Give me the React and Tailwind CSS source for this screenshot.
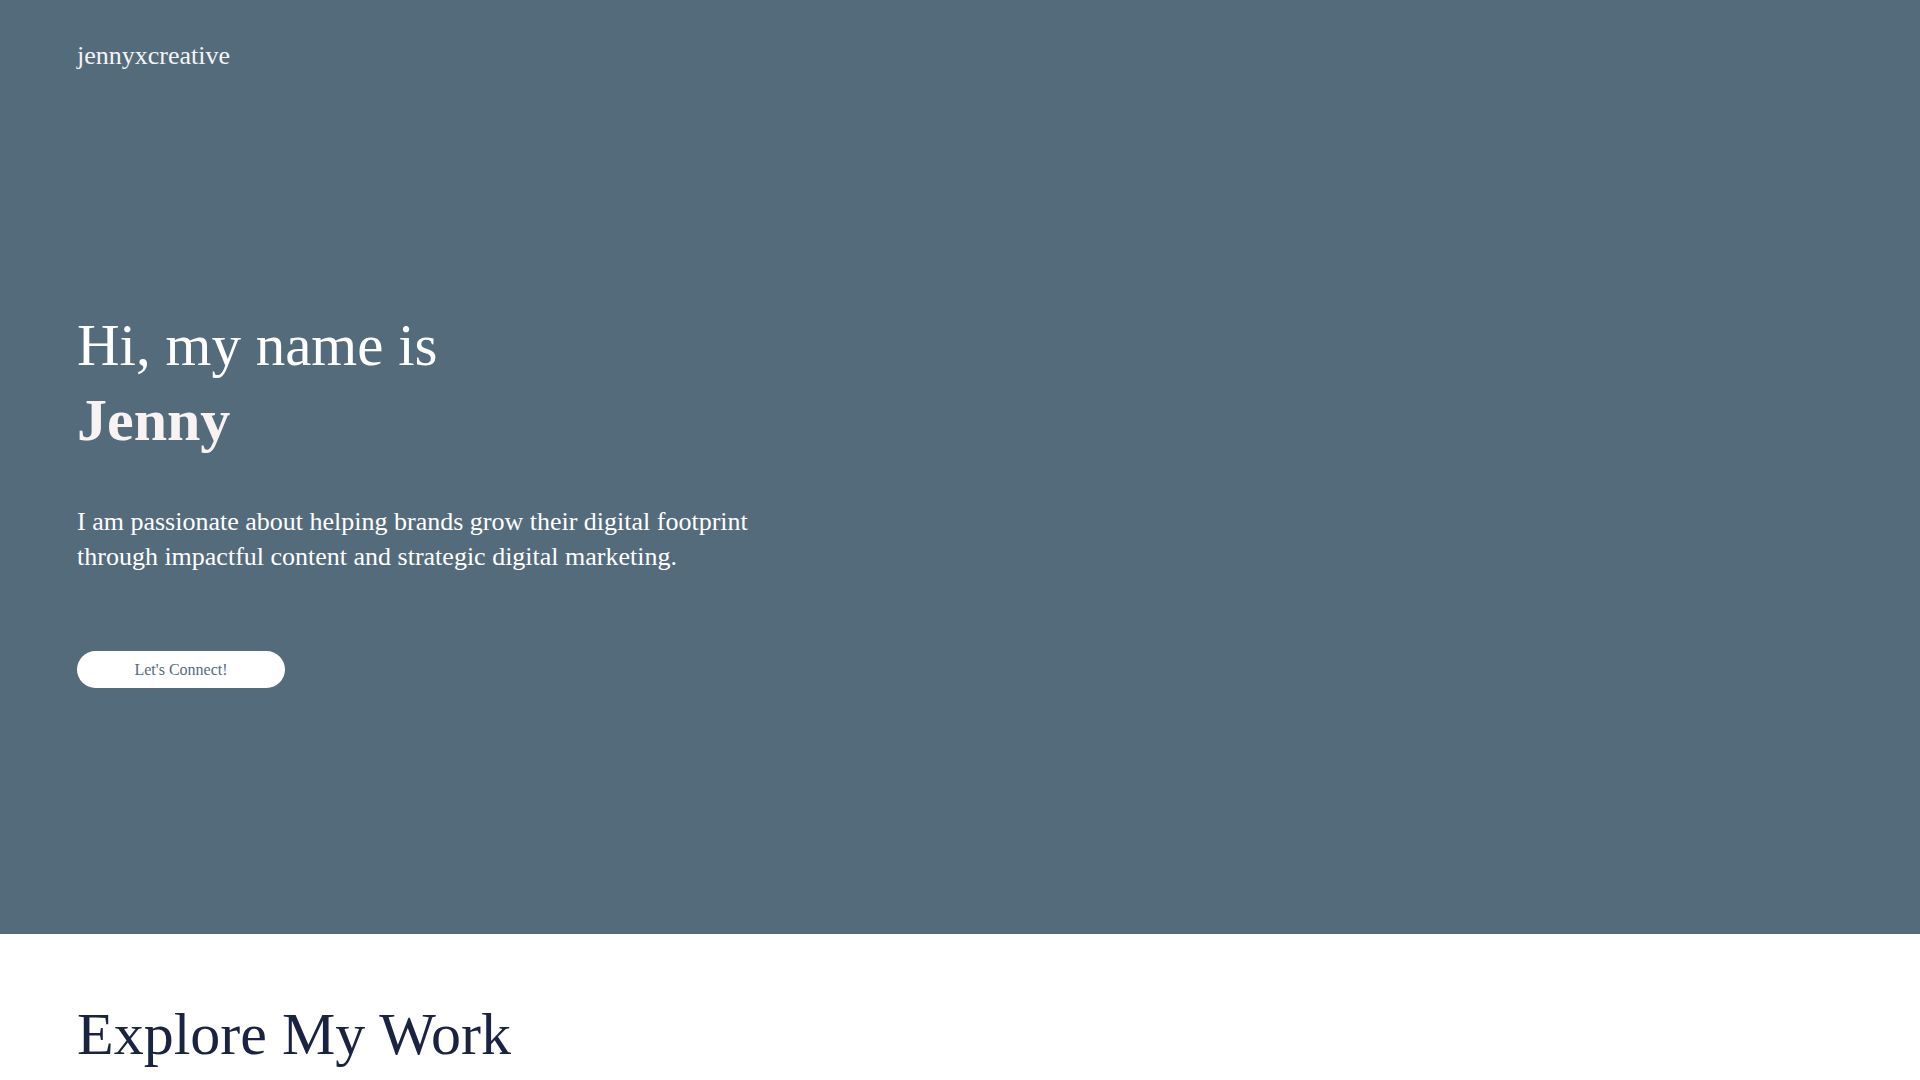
import React from 'react';

const serif = { fontFamily: '"Liberation Serif", "Times New Roman", serif' };

export default function App() {
  return (
    <div
      className="h-screen overflow-y-scroll bg-white [&::-webkit-scrollbar]:w-[15px] [&::-webkit-scrollbar-track]:bg-[#f1f1f1] [&::-webkit-scrollbar-thumb]:bg-[#c1c1c1] [&::-webkit-scrollbar-thumb]:border-x-[2px] [&::-webkit-scrollbar-thumb]:border-y-0 [&::-webkit-scrollbar-thumb]:border-solid [&::-webkit-scrollbar-thumb]:border-[#f1f1f1]"
      style={serif}
    >
      {/* hero */}
      <section className="h-[934px] bg-[#546b7c] flex flex-col">
        <header className="pt-[38px] px-[77px]">
          <a href="#" className="text-[26px] leading-[36px] text-[#f4f4f4]">jennyxcreative</a>
        </header>

        <div className="px-[77px] pt-[234px]">
          <h1 className="text-[59px] leading-[75px] text-white font-normal">
            Hi, my name is
            <br />
            <span className="font-bold text-[60px] text-[#f8f2f2]">Jenny</span>
          </h1>
          <p className="mt-[46px] max-w-[720px] text-[26px] leading-[35px] text-white">
            I am passionate about helping brands grow their digital footprint through impactful content and strategic digital marketing.
          </p>
          <button
            type="button"
            className="mt-[77px] w-[208px] h-[37px] rounded-full bg-white text-[16px] text-[#546b7c]"
          >
            Let's Connect!
          </button>
        </div>
      </section>

      {/* work */}
      <section className="px-[77px] pt-[63px] pb-40 min-h-[1270px]">
        <h2 className="text-[60px] leading-[75px] text-[#1a2342]">Explore My Work</h2>
      </section>
    </div>
  );
}
